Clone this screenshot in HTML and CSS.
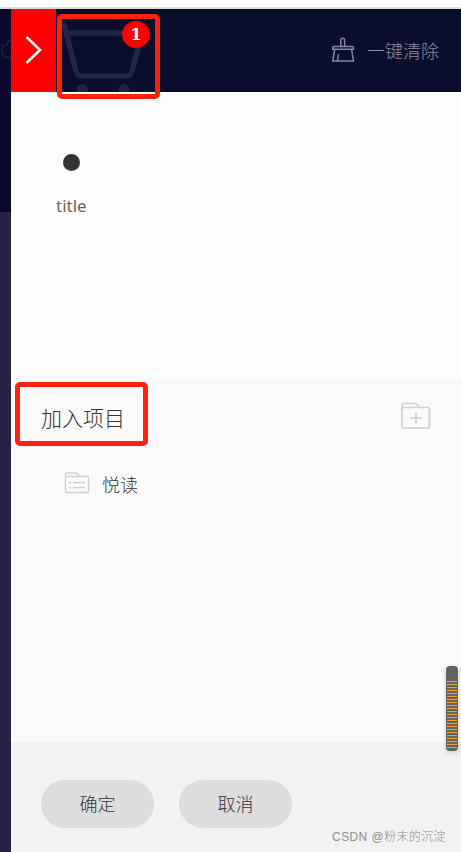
FILE: index.html
```html
<!DOCTYPE html>
<html lang="zh-CN">
<head>
<meta charset="utf-8">
<title>加入项目</title>
<link rel="stylesheet" href="styles.css">
</head>
<body>
<div class="topline"></div>
<div class="app">
  <aside class="backdrop">
    <svg class="cloud" width="11" height="24" viewBox="0 0 11 24"><path d="M11 3.500C8 3.500 7 6 7 8C3 8 1.700 11 1.700 13.500C1.700 17 4 20.500 8 20.500H11"/></svg>
  </aside>
  <main class="drawer">
    <header class="header">
      <button class="collapse" aria-label="收起"><svg width="45" height="83" viewBox="0 0 45 83"><path d="M15.500 28L29 41L15.500 54"/></svg></button>
      <div class="cart">
        <svg width="90" height="83" viewBox="56 9 90 83"><path class="line" d="M59 24H61.500Q64 24 65 28L76 71Q77.500 76 82 76H126Q131 76 132 71L142 33H67"/><circle cx="82.300" cy="89.500" r="5.500"/><circle cx="124" cy="89.500" r="5.500"/></svg>
        <span class="badge">1</span>
        <span class="mark mark-cart"></span>
      </div>
      <button class="clear">
        <svg width="24" height="26" viewBox="0 0 24 26"><path d="M9.800 9.500V3Q9.800 1.200 11.700 1.200T13.600 3V9.500M1.700 12.200V10.500Q1.700 9.500 2.700 9.500H21.500Q22.500 9.500 22.500 10.500V12.200ZM3.800 12.200L1.700 24H22.500L20.500 12.200M7.500 17L6.500 23.500"/></svg>
        <span>一键清除</span>
      </button>
    </header>
    <section class="items">
      <span class="dot"></span>
      <span class="item-title">title</span>
    </section>
    <section class="projects">
      <div class="projects-head">
        <h1>加入项目<span class="mark mark-title"></span></h1>
        <svg class="folder" width="31" height="28" viewBox="0 0 31 28"><path d="M2 5.500V3Q2 1.500 3.500 1.500H13Q18 1.500 19 5.500M2 5.500H28Q29.500 5.500 29.500 7V24.500Q29.500 26 28 26H3.500Q2 26 2 24.500ZM10.500 16H21.500M16 10.500V21.500"/></svg>
      </div>
      <div class="project">
        <svg class="folder small" width="26" height="22" viewBox="0 0 26 22"><path d="M1.500 4.500V2Q1.500 1 2.500 1H11Q14 1 15 4.500H23.500Q24.500 4.500 24.500 5.500V19.500Q24.500 20.500 23.500 20.500H2.500Q1.500 20.500 1.500 19.500V4.500H15M9 10.500H21M9 15.500H21M5 10.500H7M5 15.500H7"/></svg>
        <span class="project-name">悦读</span>
      </div>
      <div class="meter"><div class="meter-fill"></div></div>
    </section>
    <footer class="footer">
      <button class="action">确定</button>
      <button class="action">取消</button>
      <span class="credit">CSDN @粉末的沉淀</span>
    </footer>
  </main>
</div>
</body>
</html>
```
FILE: styles.css
```css
* { box-sizing: border-box; }
body {
  margin: 0;
  height: 852px;
  overflow: hidden;
  background: #fff;
  color: #333;
  font: 300 18px "Noto Sans", "Noto Sans CJK SC", sans-serif;
}
button { border: 0; padding: 0; margin: 0; font: inherit; }
svg { display: block; fill: none; flex: none; }
.topline { height: 9px; border-bottom: 2px solid #dcdcdc; }
.app { display: flex; height: 843px; }
.backdrop {
  width: 11px;
  padding-top: 28px;
  background: linear-gradient(#0a082c 203px, #272244 203px);
}
.cloud { stroke: #1e1b39; stroke-width: 2; }
.drawer { flex: 1; display: flex; flex-direction: column; }
.header {
  height: 83px;
  display: flex;
  background: #0a0d2c;
}
.collapse { width: 45px; background: #f00; }
.collapse path { stroke: #fff; stroke-width: 2.6; }
.cart { position: relative; width: 90px; }
.cart .line { stroke: #222443; stroke-width: 5.5; stroke-linejoin: round; stroke-linecap: round; }
.cart circle { fill: #222443; }
.badge {
  position: absolute;
  left: 66px;
  top: 12px;
  width: 28px;
  height: 27px;
  border-radius: 50%;
  background: #f00;
  color: #fff;
  font: 700 16px/28px "DejaVu Serif", serif;
  text-align: center;
}
.mark { position: absolute; border: 5px solid #ff2012; border-radius: 5px; z-index: 1; }
.mark-cart { left: 1px; top: 5px; width: 103px; height: 85px; }
.clear {
  display: flex;
  align-items: center;
  gap: 12px;
  margin-left: auto;
  margin-right: 22px;
  padding-bottom: 2px;
  background: none;
  color: #8c8d9f;
  font-size: 18px;
}
.clear path { stroke: #85869a; stroke-width: 1.5; }
.items {
  height: 288px;
  padding: 62px 45px 0;
  display: flex;
  flex-direction: column;
  align-items: flex-start;
  background: #fdfdfd;
}
.dot { width: 17px; height: 17px; margin-left: 7px; border-radius: 50%; background: #333; }
.item-title { margin-top: 23px; line-height: 24px; color: #666; font: 400 17px/24px "Noto Sans", sans-serif; }
.projects {
  position: relative;
  height: 362px;
  padding: 22px 30px 0;
  background: #fafafa;
}
.projects-head { display: flex; justify-content: space-between; height: 32px; }
.projects h1 {
  position: relative;
  margin: 0;
  font-weight: 300;
  font-size: 21px;
  line-height: 32px;
}
.mark-title { left: -26px; top: -20px; width: 133px; height: 64px; }
.folder { stroke: #d0d0d0; stroke-width: 1.7; }
.folder.small { stroke-width: 1.4; }
.project { display: flex; align-items: center; gap: 12px; margin: 34px 0 0 23px; line-height: 30px; }
.project-name { padding-top: 2px; margin-bottom: -2px; }
.meter {
  position: absolute;
  right: 3px;
  top: 286px;
  width: 12px;
  height: 85px;
  padding: 15px 1px 2px;
  border-radius: 4px;
  background: #636363;
  box-shadow: 0 1px 5px rgba(0, 0, 0, .2);
  z-index: 2;
}
.meter-fill { height: 68px; background: repeating-linear-gradient(#f9a01f 0 1px, #636363 1px 3px); }
.footer {
  position: relative;
  flex: 1;
  display: flex;
  gap: 25px;
  padding: 38px 30px 0;
  background: #f2f2f2;
}
.action { width: 113px; height: 48px; padding-bottom: 2px; border-radius: 24px; background: #ddd; color: #333; }
.credit {
  position: absolute;
  right: 15px;
  bottom: 6px;
  font: 300 12px/18px "Liberation Sans", "Noto Sans CJK SC", sans-serif;
  color: #909090;
  letter-spacing: .4px;
}
```
